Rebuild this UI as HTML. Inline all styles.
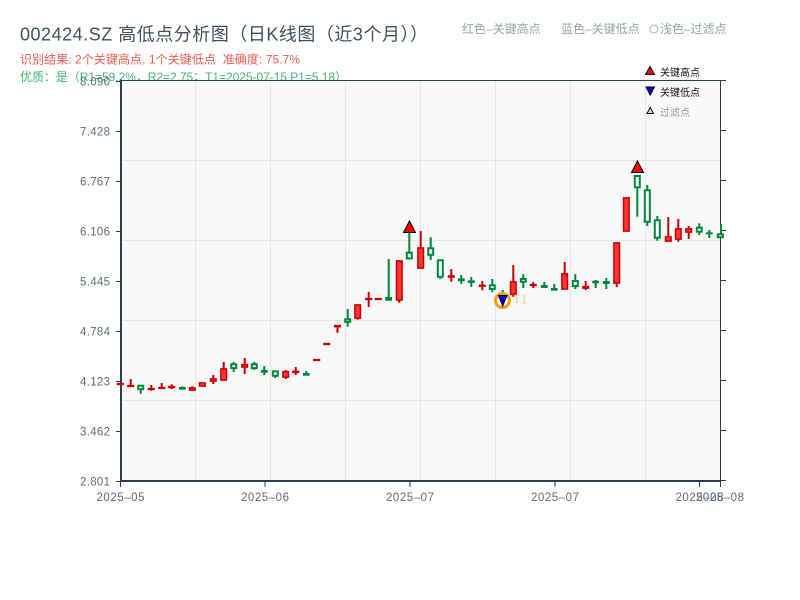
<!DOCTYPE html>
<html><head><meta charset="utf-8"><style>
html,body{margin:0;padding:0;background:#fff}
svg{display:block}
text{font-family:"Liberation Sans","Noto Sans CJK SC",sans-serif}
</style></head><body>
<svg width="800" height="600" viewBox="0 0 800 600" xmlns="http://www.w3.org/2000/svg">
<rect width="800" height="600" fill="#fff"/>
<text x="20" y="40.5" font-size="18" fill="#2c3e50" opacity=".9" textLength="408">002424.SZ 高低点分析图（日K线图（近3个月））</text>
<text x="20" y="63.5" font-size="12" fill="#e74c3c" opacity=".9" textLength="280">识别结果: 2个关键高点, 1个关键低点&#160;&#160;准确度: 75.7%</text>
<text x="20" y="81" font-size="12" fill="#27ae60" opacity=".9" textLength="327">优质：是（R1=59.2%，R2=2.75；T1=2025-07-15 P1=5.18）</text>
<text x="462" y="33" font-size="12" fill="#95a5a6">红色–关键高点</text>
<text x="561" y="33" font-size="12" fill="#95a5a6">蓝色–关键低点</text>
<circle cx="654" cy="29" r="4" fill="none" stroke="#95a5a6" stroke-width=".8"/>
<text x="660" y="33" font-size="12" fill="#95a5a6">浅色–过滤点</text>
<rect x="121" y="81" width="600" height="400" fill="#f8f9fb"/>
<g stroke="#e3e6ea" stroke-width="1">
<path d="M195.5 81V480M270.5 81V480M345.5 81V480M420.5 81V480M495.5 81V480M570.5 81V480M645.5 81V480M121 160.5H720M121 240.5H720M121 320.5H720M121 400.5H720" fill="none"/>
</g>
<g stroke="#2c3e50" fill="none">
<path d="M121 80.5H726M720.5 80V481" stroke-width="1"/>
<path d="M121 79.5V482M120 481H721" stroke-width="2"/>
<path d="M116 81.5H121M116 131.5H121M116 181.5H121M116 231.5H121M116 281.5H121M116 331.5H121M116 381.5H121M116 431.5H121M116 481.5H121" stroke-width="1"/>
<path d="M721 130.5H726M721 180.5H726M721 230.5H726M721 280.5H726M721 330.5H726M721 380.5H726M721 430.5H726M721 480.5H726" stroke-width="1"/>
<path d="M120.5 481V487M265 481V487M410 481V487M555 481V487M699.5 481V487M720.5 481V487" stroke-width="1"/>
</g>
<g font-size="11.5" fill="#5f6b78" text-anchor="end">
<text x="110" y="85.5" textLength="30">8.090</text><text x="110" y="135.5" textLength="30">7.428</text><text x="110" y="185.5" textLength="30">6.767</text><text x="110" y="235.5" textLength="30">6.106</text><text x="110" y="285.5" textLength="30">5.445</text><text x="110" y="335.5" textLength="30">4.784</text><text x="110" y="385.5" textLength="30">4.123</text><text x="110" y="435.5" textLength="30">3.462</text><text x="110" y="485.5" textLength="30">2.801</text>
</g>
<g font-size="11.5" fill="#5f6b78" text-anchor="middle">
<text x="120.5" y="501" textLength="48">2025–05</text><text x="265" y="501" textLength="48">2025–06</text><text x="410" y="501" textLength="48">2025–07</text><text x="555" y="501" textLength="48">2025–07</text><text x="699.5" y="501" textLength="48">2025–08</text><text x="720" y="501" textLength="48">2025–08</text>
</g>
<path stroke="#cc0000" stroke-width="2" fill="none" d="M130.7 379V386M151.3 385V390.7M161.7 383V388M171.7 384.3V389M192.3 386.3V388M213.3 375V384M223.7 362V369M244.7 358V374M285.7 370V379M295.7 367V375M337.5 326V332.7M357.7 316V319.7M368.7 292V307M399.3 298V302.7M420.7 231V248M451.3 269V281.7M482.3 281V290.3M513.3 265V296.7M533.3 282V288M564.7 262V274M585.7 281V290M616.7 280V287M668.3 217V237M678.3 219V241.7M688.7 226V239"/>
<g fill="#ff3333" stroke="#cc0000" stroke-width="1.5">
<rect x="117.5" y="383.6" width="5.6" height=".8"/><rect x="127.9" y="385.6" width="5.6" height=".8"/><rect x="148.5" y="388.6" width="5.6" height=".8"/><rect x="158.9" y="387.6" width="5.6" height=".8"/><rect x="168.9" y="386.6" width="5.6" height=".8"/><rect x="189.5" y="387.9" width="5.6" height="2.2"/><rect x="199.5" y="382.9" width="5.6" height="3.2"/><rect x="210.5" y="378.9" width="5.6" height="2.2"/><rect x="220.9" y="368.9" width="5.6" height="11.2"/><rect x="241.9" y="364.6" width="5.6" height="2.5"/><rect x="282.9" y="371.6" width="5.6" height="5.5"/><rect x="292.9" y="371.3" width="5.6" height="1.1"/><rect x="313.9" y="359.6" width="5.6" height=".8"/><rect x="323.9" y="343.6" width="5.6" height=".8"/><rect x="334.7" y="325.6" width="5.6" height="1.1"/><rect x="354.9" y="304.9" width="5.6" height="13.2"/><rect x="365.9" y="298.6" width="5.6" height=".8"/><rect x="375.5" y="298.6" width="5.6" height=".8"/><rect x="396.5" y="260.9" width="5.6" height="39.2"/><rect x="417.9" y="247.9" width="5.6" height="20.2"/><rect x="448.5" y="275.9" width="5.6" height="1.2"/><rect x="479.5" y="285.3" width="5.6" height=".8"/><rect x="510.5" y="281.9" width="5.6" height="12.5"/><rect x="530.5" y="284.6" width="5.6" height=".8"/><rect x="561.9" y="273.9" width="5.6" height="15.2"/><rect x="582.9" y="286.6" width="5.6" height="1.5"/><rect x="613.9" y="242.9" width="5.6" height="40.2"/><rect x="623.5" y="197.9" width="5.6" height="33.2"/><rect x="665.5" y="236.9" width="5.6" height="4.2"/><rect x="675.5" y="228.9" width="5.6" height="10.2"/><rect x="685.9" y="228.9" width="5.6" height="3.2"/>
</g>
<path stroke="#00873c" stroke-width="2" fill="none" d="M140.7 390V393.7M182.3 386.3V388M233.7 362V372M254.3 362V370M264.3 366V375M275.3 376V378M306.3 371V374M347.7 309V326.7M388.7 259V298M409.3 230V252M430.7 237.3V260M440.3 277V279M461.3 275V284M471.3 277V287M492.3 279V292.3M502.7 290V296M523.3 274.3V288M544.3 282V286M554.3 284V289M575.3 274V289M595.7 280V288M606.3 278V289M637.3 188V216.7M647.3 185V226M657.3 216V240.7M699.3 223.3V235M709.3 230V238M721 224V234"/>
<g fill="#ffffff" stroke="#00873c" stroke-width="2">
<rect x="138.2" y="385.7" width="5" height="3.4"/><rect x="231.2" y="364.3" width="5" height="3.8"/><rect x="251.8" y="364.3" width="5" height="3.8"/><rect x="272.8" y="371.3" width="5" height="4.5"/><rect x="345.2" y="319.3" width="5" height="2.5"/><rect x="406.8" y="252.7" width="5" height="5.7"/><rect x="428.2" y="248.3" width="5" height="6.5"/><rect x="437.8" y="260.3" width="5" height="16.5"/><rect x="489.8" y="285.3" width="5" height="3.7"/><rect x="520.8" y="279" width="5" height="2.7"/><rect x="572.8" y="281" width="5" height="5"/><rect x="634.8" y="176" width="5" height="11.3"/><rect x="644.8" y="190.3" width="5" height="31.4"/><rect x="654.8" y="220.3" width="5" height="17.4"/><rect x="696.8" y="227.7" width="5" height="4"/><rect x="717.8" y="234.3" width="5" height="3"/>
</g>
<g fill="#00873c">
<rect x="178.9" y="387" width="6.8" height="2.7"/><rect x="260.9" y="370" width="6.8" height="2.7"/><rect x="302.9" y="373" width="6.8" height="2.7"/><rect x="385.3" y="297" width="6.8" height="3.7"/><rect x="457.9" y="278.3" width="6.8" height="3"/><rect x="467.9" y="280.3" width="6.8" height="2.7"/><rect x="540.9" y="285" width="6.8" height="3"/><rect x="550.9" y="288" width="6.8" height="2.7"/><rect x="592.3" y="280.7" width="6.8" height="2.6"/><rect x="602.9" y="281" width="6.8" height="3"/><rect x="705.9" y="232.3" width="6.8" height="2"/>
</g>
<g fill="#ff0000" stroke="#000" stroke-width="1">
<path d="M409.5 221L415.5 232.5H403.5Z"/>
<path d="M637.5 161L643.5 172.5H631.5Z"/>
<path d="M650 66.5L654.5 74.5H645.5Z"/>
</g>
<circle cx="502.5" cy="300.5" r="7" fill="none" stroke="#f39c12" stroke-width="3"/>
<path d="M498.5 295.5H507L502.7 306Z" fill="#0000ff" stroke="#000" stroke-width="1"/>
<text x="513" y="303.5" font-size="12.5" fill="#f39c12" opacity=".5">T1</text>
<path d="M646 87H654.5L650.2 95Z" fill="#0000ff" stroke="#000" stroke-width="1"/>
<path d="M650.2 107.5L653.5 113.5H647Z" fill="#ffd0d0" stroke="#000" stroke-width="1"/>
<text x="660" y="76" font-size="10" fill="#111">关键高点</text>
<text x="660" y="96" font-size="10" fill="#111">关键低点</text>
<text x="660" y="116" font-size="10" fill="#999">过滤点</text>
</svg>
</body></html>
